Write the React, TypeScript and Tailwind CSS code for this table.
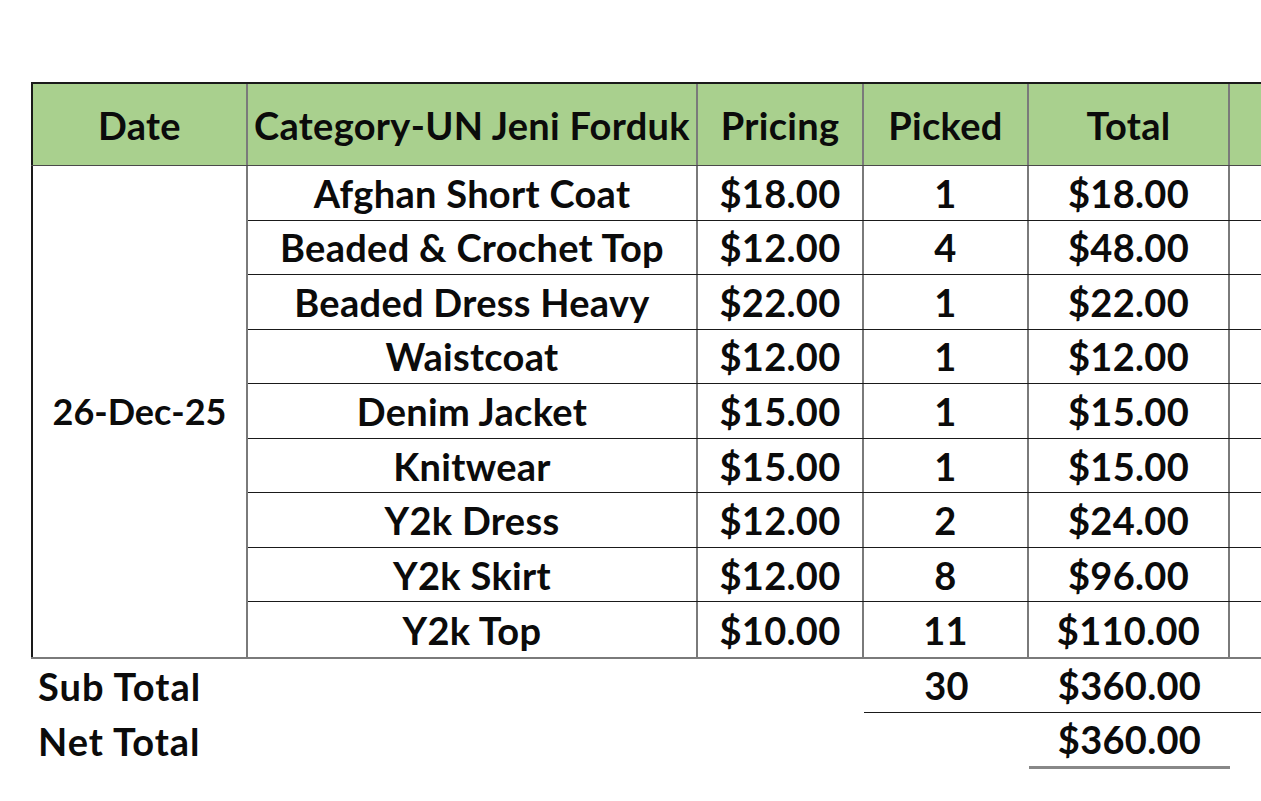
import React from "react";

const rows: [string, string, string, string][] = [
  ["Afghan Short Coat", "$18.00", "1", "$18.00"],
  ["Beaded & Crochet Top", "$12.00", "4", "$48.00"],
  ["Beaded Dress Heavy", "$22.00", "1", "$22.00"],
  ["Waistcoat", "$12.00", "1", "$12.00"],
  ["Denim Jacket", "$15.00", "1", "$15.00"],
  ["Knitwear", "$15.00", "1", "$15.00"],
  ["Y2k Dress", "$12.00", "2", "$24.00"],
  ["Y2k Skirt", "$12.00", "8", "$96.00"],
  ["Y2k Top", "$10.00", "11", "$110.00"],
];

const cols = "grid grid-cols-[217px_450px_166px_165px_201px_1fr]";

export default function App() {
  return (
    <div
      className="w-[1261px] h-[801px] overflow-hidden bg-white text-[#0b0b0b] font-bold text-[38px] tracking-[0.3px] leading-none"
      style={{ fontFamily: "Lato, 'Open Sans', sans-serif" }}
    >
      <div className="pt-[82px] pl-[31px] w-[1300px]">
        {/* Header */}
        <div className={`${cols} h-[84px] bg-[#a9d08e] border-t-2 border-[#1a1a1a] border-b border-b-[#4a4a4a]`}>
          <div className="flex items-center justify-center border-l-2 border-l-[#1a1a1a] border-r-2 border-r-[#7a7a7a]">Date</div>
          <div className="flex items-center justify-center border-r-2 border-r-[#7a7a7a] whitespace-nowrap">Category-UN Jeni Forduk</div>
          <div className="flex items-center justify-center border-r-2 border-r-[#7a7a7a]">Pricing</div>
          <div className="flex items-center justify-center border-r-2 border-r-[#7a7a7a]">Picked</div>
          <div className="flex items-center justify-center border-r-2 border-r-[#7a7a7a]">Total</div>
          <div></div>
        </div>
        {/* Body */}
        <div className="flex border-b-2 border-[#7a7a7a]">
          <div className="w-[217px] shrink-0 flex items-center justify-center border-l-2 border-l-[#1a1a1a] border-r-2 border-r-[#7a7a7a] text-[36px] tracking-normal">
            26-Dec-25
          </div>
          <div className="flex-1 flex flex-col">
            {rows.map((r, i) => (
              <div
                key={i}
                className={`grid grid-cols-[450px_166px_165px_201px_1fr] h-[54.56px] ${i < rows.length - 1 ? "border-b border-[#1a1a1a]" : ""}`}
              >
                <div className="flex items-center justify-center border-r-2 border-r-[#7a7a7a] whitespace-nowrap">{r[0]}</div>
                <div className="flex items-center justify-center border-r-2 border-r-[#7a7a7a]">{r[1]}</div>
                <div className="flex items-center justify-center border-r-2 border-r-[#7a7a7a]">{r[2]}</div>
                <div className="flex items-center justify-center border-r-2 border-r-[#7a7a7a]">{r[3]}</div>
                <div></div>
              </div>
            ))}
          </div>
        </div>
        {/* Sub Total */}
        <div className={`${cols} h-[54px]`}>
          <div className="flex items-center pl-[7px] whitespace-nowrap tracking-[1px]">Sub Total</div>
          <div></div>
          <div></div>
          <div className="flex items-center justify-center border-b border-[#1a1a1a]">30</div>
          <div className="flex items-center justify-center border-b border-[#1a1a1a]">$360.00</div>
          <div className="border-b border-[#1a1a1a]"></div>
        </div>
        {/* Net Total */}
        <div className={`${cols} h-[56px]`}>
          <div className="flex items-center pl-[7px] whitespace-nowrap tracking-[1px]">Net Total</div>
          <div></div>
          <div></div>
          <div></div>
          <div className="flex items-center justify-center border-b-[3px] border-[#888888]">$360.00</div>
          <div></div>
        </div>
      </div>
    </div>
  );
}
